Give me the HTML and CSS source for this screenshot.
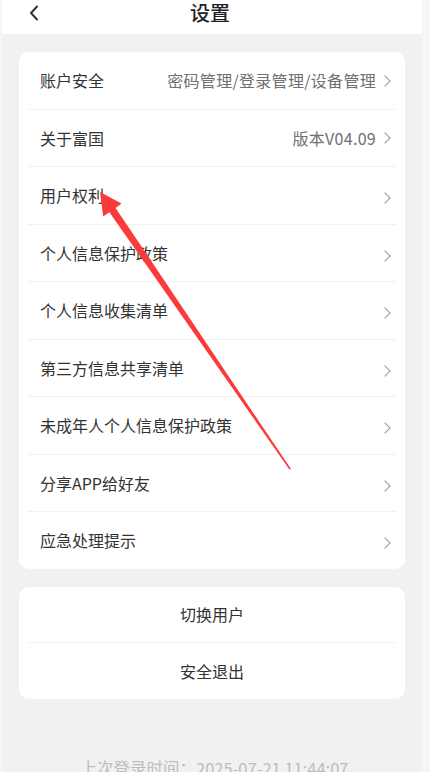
FILE: index.html
```html
<!DOCTYPE html>
<html lang="zh-CN">
<head>
    <meta charset="UTF-8">
    <meta name="viewport" content="width=device-width, initial-scale=1.0">
    <title>设置</title>
    <link rel="stylesheet" href="styles.css">
</head>
<body>
    <div class="page">
        <div class="header">
            <svg class="back" width="10" height="16" viewBox="0 0 10 16">
                <path d="M8 1.5 L2 8 L8 14.5" fill="none" stroke="#333" stroke-width="2" stroke-linecap="round" stroke-linejoin="round"/>
            </svg>
            <div class="title">设置</div>
        </div>

        <div class="card list">
            <div class="row"><span class="label">账户安全</span><span class="value">密码管理/登录管理/设备管理</span><i class="arrow"></i></div>
            <div class="row"><span class="label">关于富国</span><span class="value">版本V04.09</span><i class="arrow"></i></div>
            <div class="row"><span class="label">用户权利</span><span class="value"></span><i class="arrow"></i></div>
            <div class="row"><span class="label">个人信息保护政策</span><span class="value"></span><i class="arrow"></i></div>
            <div class="row"><span class="label">个人信息收集清单</span><span class="value"></span><i class="arrow"></i></div>
            <div class="row"><span class="label">第三方信息共享清单</span><span class="value"></span><i class="arrow"></i></div>
            <div class="row"><span class="label">未成年人个人信息保护政策</span><span class="value"></span><i class="arrow"></i></div>
            <div class="row"><span class="label">分享APP给好友</span><span class="value"></span><i class="arrow"></i></div>
            <div class="row"><span class="label">应急处理提示</span><span class="value"></span><i class="arrow"></i></div>
        </div>

        <div class="card actions">
            <div class="action">切换用户</div>
            <div class="action">安全退出</div>
        </div>

        <div class="last-login">上次登录时间：2025-07-21 11:44:07</div>
    </div>

    <!-- 标注箭头 -->
    <svg class="mark" width="430" height="772" viewBox="0 0 430 772">
        <polygon points="100,192 121.5,203.5 115.6,208 291,469 289.4,469.6 109.4,212.2 103.2,216.6" fill="#fb3a3a"/>
    </svg>
</body>
</html>
```

FILE: styles.css
```css
body {
    margin: 0;
    background: #f6f6f6;
    font-family: "Noto Sans CJK SC", "Noto Sans", sans-serif;
    color: #333;
    height: 772px;
    overflow: hidden;
    position: relative;
}
.page {
    margin-left: 2px;
    width: 420px;
    min-height: 772px;
    background: #f1f1f1;
}
.header {
    height: 34px;
    background: #fff;
    display: flex;
    align-items: center;
    justify-content: center;
    position: relative;
    margin-bottom: 18px;
}
.back {
    position: absolute;
    left: 27px;
    top: 5px;
}
.title {
    font-size: 20px;
    font-weight: 500;
    color: #222;
    line-height: 26px;
    margin-top: -8px;
    margin-right: 4px;
}
.card {
    background: #fff;
    border-radius: 10px;
    margin: 0 17px;
    padding: 0 9px;
}
.row {
    height: 57.5px;
    box-sizing: border-box;
    border-bottom: 1px solid #f1f1f1;
    display: flex;
    align-items: center;
    padding: 0 5px 0 12px;
}
.row:last-child {
    border-bottom: none;
    height: 56.5px;
}
.label {
    font-size: 16px;
    color: #333;
}
.value {
    flex: 1;
    text-align: right;
    font-size: 16px;
    letter-spacing: 0.3px;
    color: #707070;
    margin-right: 5px;
}
.arrow {
    width: 7px;
    height: 7px;
    border-top: 1.2px solid #999;
    border-right: 1.2px solid #999;
    transform: rotate(45deg);
    margin-right: 2px;
    margin-top: 1px;
}
.row:nth-child(n+3) .arrow {
    margin-top: 6px;
}
.actions {
    margin-top: 18px;
}
.action {
    height: 56px;
    box-sizing: border-box;
    display: flex;
    align-items: center;
    justify-content: center;
    font-size: 16px;
    color: #333;
    border-bottom: 1px solid #f1f1f1;
}
.action:last-child {
    border-bottom: none;
}
.last-login {
    margin-top: 57px;
    text-align: center;
    font-size: 16.5px;
    color: #bdbdbd;
    padding-left: 5px;
}
.mark {
    position: absolute;
    left: 0;
    top: 0;
    pointer-events: none;
}
```
